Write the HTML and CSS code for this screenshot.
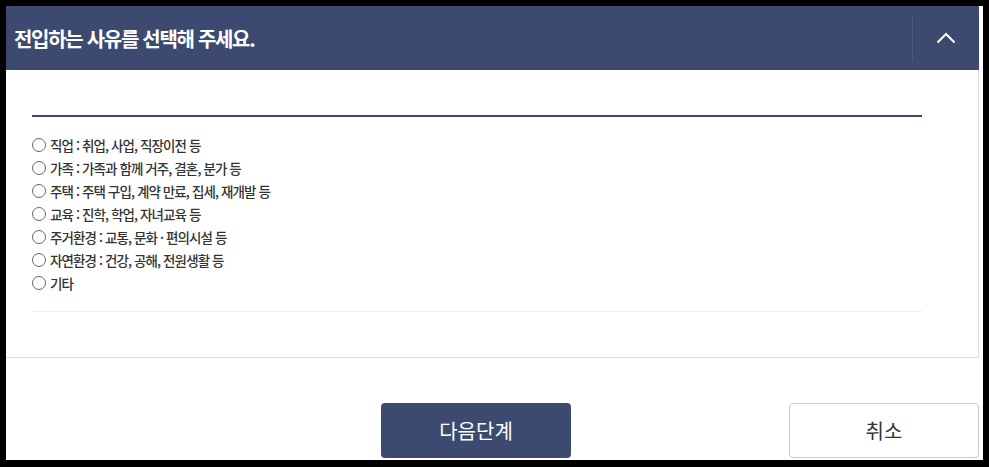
FILE: index.html
```html
<!DOCTYPE html>
<html lang="ko">
<head>
<meta charset="utf-8">
<link rel="stylesheet" href="styles.css">
</head>
<body>
<div class="frame">
  <div class="panel">
    <div class="panel-head">
      <h2 class="title">전입하는 사유를 선택해 주세요.</h2>
      <div class="toggle">
        <svg width="20" height="12" viewBox="0 0 20 12"><polyline points="1.5,10.5 10,2 18.5,10.5" fill="none" stroke="#fff" stroke-width="2"/></svg>
      </div>
    </div>
    <div class="panel-body">
      <div class="rule-top"></div>
      <ul class="options">
        <li><span class="radio"></span>직업 : 취업, 사업, 직장이전 등</li>
        <li><span class="radio"></span>가족 : 가족과 함께 거주, 결혼, 분가 등</li>
        <li><span class="radio"></span>주택 : 주택 구입, 계약 만료, 집세, 재개발 등</li>
        <li><span class="radio"></span>교육 : 진학, 학업, 자녀교육 등</li>
        <li><span class="radio"></span>주거환경 : 교통, 문화 · 편의시설 등</li>
        <li><span class="radio"></span>자연환경 : 건강, 공해, 전원생활 등</li>
        <li><span class="radio"></span>기타</li>
      </ul>
      <div class="rule-bottom"></div>
    </div>
  </div>
  <div class="actions">
    <button class="btn btn-primary">다음단계</button>
    <button class="btn btn-cancel">취소</button>
  </div>
</div>
</body>
</html>
```
FILE: styles.css
```css
html, body { margin: 0; padding: 0; }
body {
  background: #000;
  padding: 6px 6px 7px 6px;
  width: 977px;
  height: 454px;
  font-family: "Noto Sans CJK KR", "Noto Sans", sans-serif;
}
.frame {
  background: #fff;
  width: 977px;
  height: 454px;
  display: flex;
  flex-direction: column;
}
.panel {
  width: 973px;
}
.panel-head {
  height: 64px;
  background: #3c4a70;
  display: flex;
  align-items: center;
  justify-content: space-between;
}
.title {
  margin: 0 0 0 8px;
  color: #fff;
  font-size: 20px;
  font-weight: 700;
  letter-spacing: -1.3px;
}
.toggle {
  width: 66px;
  height: 46px;
  border-left: 1px solid #4b5879;
  display: flex;
  align-items: center;
  justify-content: center;
}
.panel-body {
  border-right: 1px solid #ddd;
  border-bottom: 1px solid #ddd;
  height: 288px;
  padding: 45px 56px 0 26px;
  box-sizing: border-box;
}
.rule-top {
  height: 2px;
  background: #3c4a70;
}
.options {
  list-style: none;
  margin: 0;
  padding: 16px 0 0 0;
}
.options li {
  height: 23px;
  display: flex;
  align-items: center;
  font-size: 13.5px;
  font-weight: 500;
  color: #333;
  letter-spacing: -0.9px;
}
.radio {
  width: 12px;
  height: 12px;
  border: 1px solid #666;
  border-radius: 50%;
  margin-right: 4px;
  flex: none;
}
.rule-bottom {
  height: 1px;
  background: #eee;
  margin-top: 17px;
}
.actions {
  display: flex;
  padding: 45px 0 0 375px;
  gap: 218px;
}
.btn {
  width: 190px;
  height: 55px;
  border-radius: 4px;
  font-family: "Noto Sans CJK KR", "Noto Sans", sans-serif;
  font-size: 20px;
  padding: 0;
  box-sizing: border-box;
}
.btn-primary {
  background: #3c4a70;
  color: #fff;
  border: none;
}
.btn-cancel {
  background: #fff;
  color: #333;
  border: 1px solid #ccc;
}
```
